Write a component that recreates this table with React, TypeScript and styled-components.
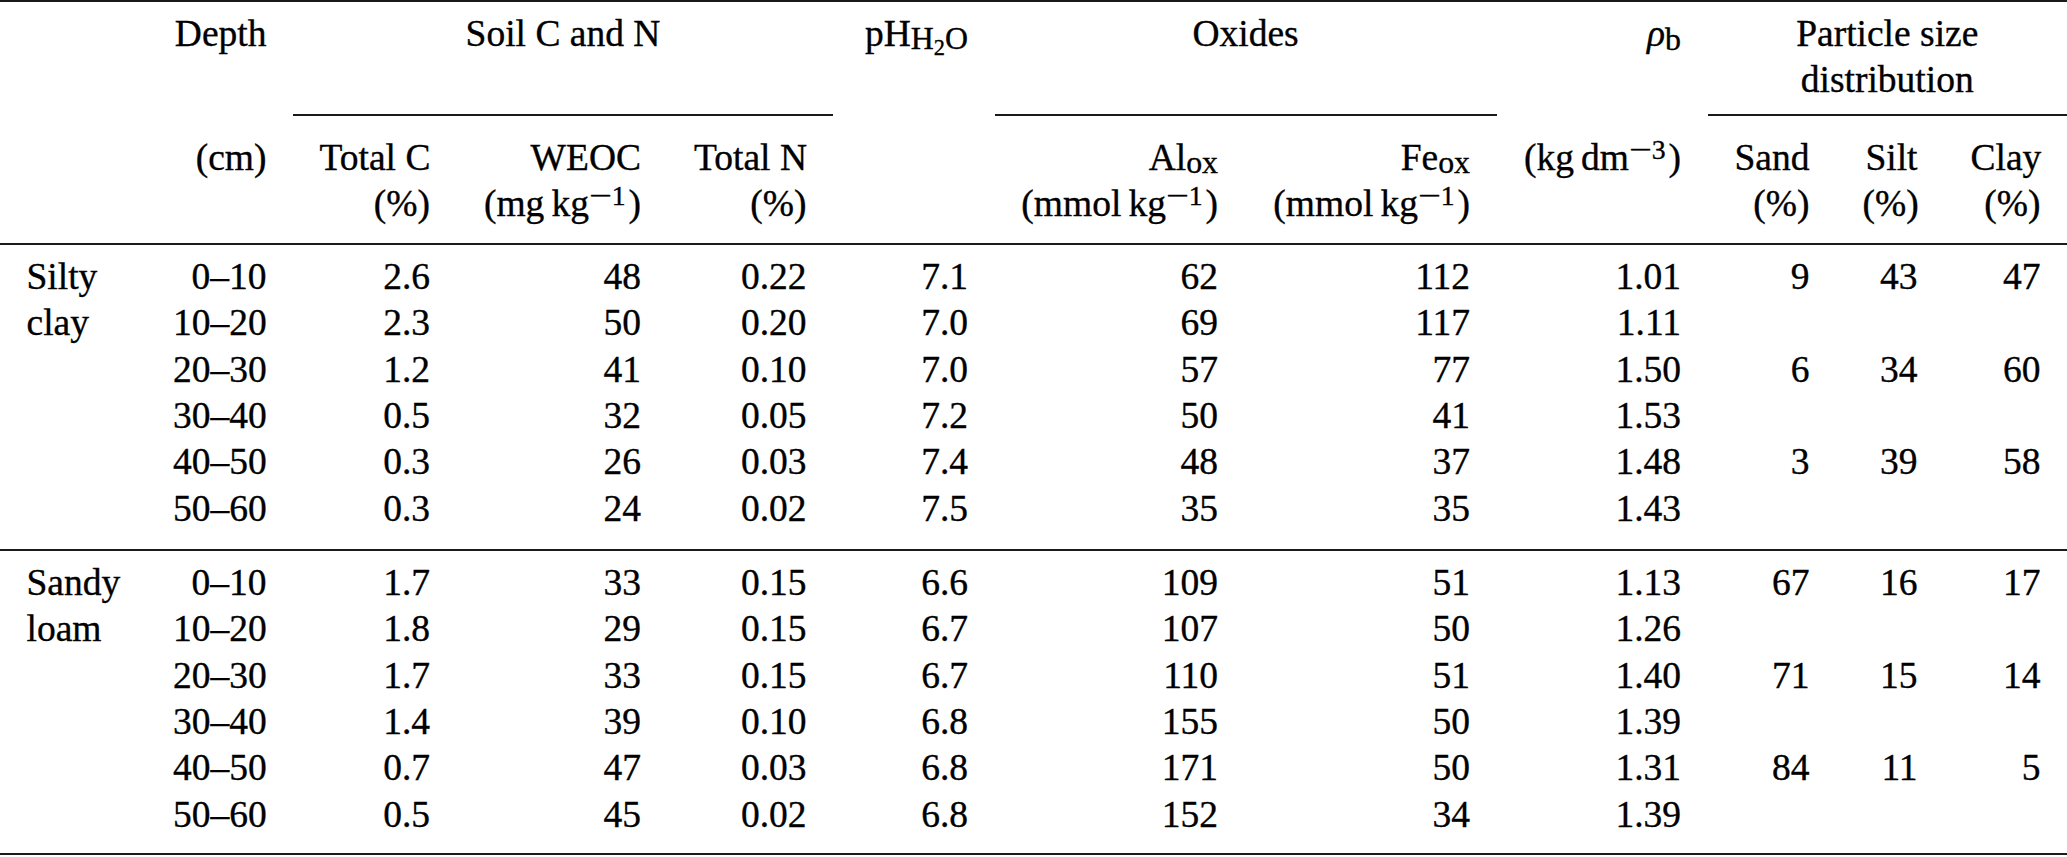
import styled, { createGlobalStyle } from "styled-components";

const GlobalStyle = createGlobalStyle`
  html,
  body {
    margin: 0;
    padding: 0;
    background: #ffffff;
  }

  body {
    font-family: "Liberation Serif", serif;
    color: #000000;
  }
`;

// column widths taken from the typeset table (boundary to boundary)
const COLUMNS =
  "146.5px 146.5px 163.5px 211px 165.5px 161.5px 250px 252px 211px 128.5px 108px 123px";

const RULE = "2px solid #1a1a1a";

const Table = styled.div`
  width: 2067px;
  border-top: ${RULE};
  border-bottom: ${RULE};
  font-family: "Liberation Serif", "Times New Roman", serif;
  font-size: 37.5px;
  line-height: 46.3px;
  color: #000000;
  -webkit-text-stroke: 0.35px #000000;
`;

const Band = styled.div<{ $top: number; $bottom: number; $rule?: boolean }>`
  display: grid;
  grid-template-columns: ${COLUMNS};
  padding: ${({ $top, $bottom }) => `${$top}px 0 ${$bottom}px`};
  border-bottom: ${({ $rule }) => ($rule ? RULE : "none")};
`;

const Cell = styled.div<{ $align?: "left" | "right" | "center"; $span?: number }>`
  grid-column: ${({ $span }) => ($span ? `span ${$span}` : "auto")};
  padding: 0 26.5px;
  text-align: ${({ $align }) => $align ?? "right"};
  white-space: nowrap;
`;

const GroupCell = styled(Cell)<{ $rule?: boolean }>`
  padding-bottom: 10.2px;
  border-bottom: ${({ $rule }) => ($rule ? RULE : "none")};
`;

const Sub = styled.span<{ $size?: number; $drop?: number }>`
  font-size: ${({ $size }) => $size ?? 0.85}em;
  position: relative;
  top: ${({ $drop }) => $drop ?? 0.1}em;
  line-height: 0;
`;

const Sup = styled.span`
  font-size: 0.74em;
  position: relative;
  top: -0.42em;
  margin-right: 0.1em;
  line-height: 0;
`;

// the math minus is wider than the text one
const Minus = styled.span`
  display: inline-block;
  margin: 0 0.12em 0 0.14em;
  transform: scaleX(1.45);
`;

const Thin = styled.span`
  display: inline-block;
  width: 0.19em;
`;

const MathVar = styled.span`
  font-style: italic;
`;

type Row = string[];

const siltyClay: Row[] = [
  ["Silty", "0–10", "2.6", "48", "0.22", "7.1", "62", "112", "1.01", "9", "43", "47"],
  ["clay", "10–20", "2.3", "50", "0.20", "7.0", "69", "117", "1.11", "", "", ""],
  ["", "20–30", "1.2", "41", "0.10", "7.0", "57", "77", "1.50", "6", "34", "60"],
  ["", "30–40", "0.5", "32", "0.05", "7.2", "50", "41", "1.53", "", "", ""],
  ["", "40–50", "0.3", "26", "0.03", "7.4", "48", "37", "1.48", "3", "39", "58"],
  ["", "50–60", "0.3", "24", "0.02", "7.5", "35", "35", "1.43", "", "", ""],
];

const sandyLoam: Row[] = [
  ["Sandy", "0–10", "1.7", "33", "0.15", "6.6", "109", "51", "1.13", "67", "16", "17"],
  ["loam", "10–20", "1.8", "29", "0.15", "6.7", "107", "50", "1.26", "", "", ""],
  ["", "20–30", "1.7", "33", "0.15", "6.7", "110", "51", "1.40", "71", "15", "14"],
  ["", "30–40", "1.4", "39", "0.10", "6.8", "155", "50", "1.39", "", "", ""],
  ["", "40–50", "0.7", "47", "0.03", "6.8", "171", "50", "1.31", "84", "11", "5"],
  ["", "50–60", "0.5", "45", "0.02", "6.8", "152", "34", "1.39", "", "", ""],
];

const Power = ({ n }: { n: number }) => (
  <Sup>
    <Minus>−</Minus>
    {n}
  </Sup>
);

const perKg = (prefix: string) => (
  <>
    ({prefix}
    <Thin />
    kg
    <Power n={1} />)
  </>
);

function Section({ rows, bottom, rule }: { rows: Row[]; bottom: number; rule?: boolean }) {
  return (
    <Band $top={9.2} $bottom={bottom} $rule={rule}>
      {rows.map((row, r) =>
        row.map((value, c) => (
          <Cell key={`${r}-${c}`} $align={c === 0 ? "left" : "right"}>
            {value}
          </Cell>
        ))
      )}
    </Band>
  );
}

export default function App() {
  return (
    <>
      <GlobalStyle />
      <Table>
        <Band $top={9.2} $bottom={0}>
          <GroupCell />
          <GroupCell>Depth</GroupCell>
          <GroupCell $span={3} $align="center" $rule>
            Soil C and N
          </GroupCell>
          <GroupCell>
            pH
            <Sub>
              H<Sub $size={0.7} $drop={0.25}>2</Sub>O
            </Sub>
          </GroupCell>
          <GroupCell $span={2} $align="center" $rule>
            Oxides
          </GroupCell>
          <GroupCell>
            <MathVar>ρ</MathVar>
            <Sub $drop={0.12}>b</Sub>
          </GroupCell>
          <GroupCell $span={3} $align="center" $rule>
            Particle size
            <br />
            distribution
          </GroupCell>
        </Band>

        <Band $top={19.2} $bottom={15.2} $rule>
          <Cell />
          <Cell>(cm)</Cell>
          <Cell>
            Total C
            <br />
            (%)
          </Cell>
          <Cell>
            WEOC
            <br />
            {perKg("mg")}
          </Cell>
          <Cell>
            Total N
            <br />
            (%)
          </Cell>
          <Cell />
          <Cell>
            Al<Sub>ox</Sub>
            <br />
            {perKg("mmol")}
          </Cell>
          <Cell>
            Fe<Sub>ox</Sub>
            <br />
            {perKg("mmol")}
          </Cell>
          <Cell>
            (kg
            <Thin />
            dm
            <Power n={3} />)
          </Cell>
          <Cell>
            Sand
            <br />
            (%)
          </Cell>
          <Cell>
            Silt
            <br />
            (%)
          </Cell>
          <Cell>
            Clay
            <br />
            (%)
          </Cell>
        </Band>

        <Section rows={siltyClay} bottom={17} rule />
        <Section rows={sandyLoam} bottom={15} />
      </Table>
    </>
  );
}
